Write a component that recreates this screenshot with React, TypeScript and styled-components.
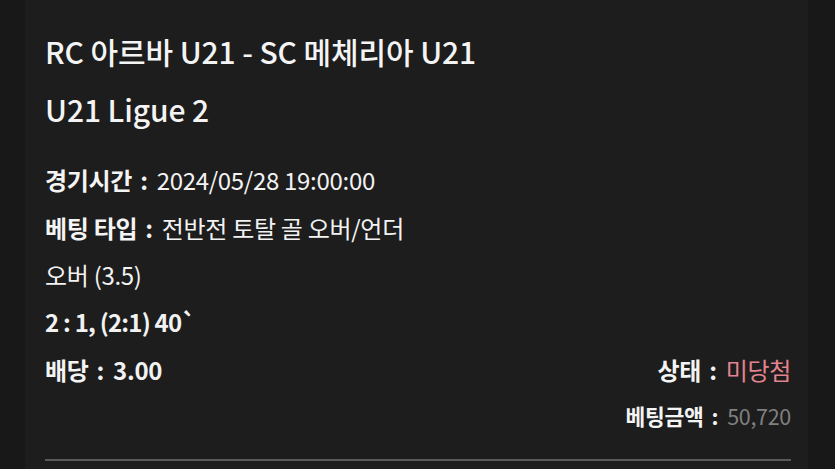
import styled, { createGlobalStyle } from 'styled-components';

const GlobalStyle = createGlobalStyle`
  html, body {
    margin: 0;
    padding: 0;
    background: #181818;
  }
  body {
    font-family: "Noto Sans CJK KR", "Noto Sans", sans-serif;
    color: #f2f2f2;
  }
`;

const Card = styled.section`
  margin: 0 27px 0 25px;
  min-height: 469px;
  box-sizing: border-box;
  background: #1d1d1d;
  padding: 22px 17px 0 20px;
  display: flex;
  flex-direction: column;
`;

const Title = styled.h2`
  margin: 0;
  font-size: 30px;
  font-weight: 500;
  line-height: 58px;
  letter-spacing: -0.1px;
  color: #f4f4f4;
`;

const Details = styled.div`
  margin-top: 18px;
  display: flex;
  flex-direction: column;
`;

const Row = styled.div<{ $split?: boolean }>`
  display: flex;
  justify-content: ${(p) => (p.$split ? 'space-between' : 'flex-start')};
  align-items: center;
  height: 47.4px;
  font-size: 24px;
  letter-spacing: -0.3px;
`;

const Right = styled(Row)`
  justify-content: flex-end;
  height: 45px;
  font-size: 21.5px;
`;

const Label = styled.span`
  font-weight: 700;
  color: #f4f4f4;
`;

const Colon = styled.span`
  font-weight: 700;
  margin: 0 9px 0 8px;
`;

const Value = styled.span<{ $tone?: 'lose' | 'muted' | 'bold' }>`
  font-weight: ${(p) => (p.$tone === 'bold' ? 700 : 400)};
  color: ${(p) =>
    p.$tone === 'lose' ? '#e2848f' : p.$tone === 'muted' ? '#808080' : '#f2f2f2'};
`;

const Score = styled(Value)`
  letter-spacing: -0.8px;
`;

const Divider = styled.hr`
  margin: 21px 0 0 0;
  border: none;
  height: 2px;
  background: #5a5a5a;
`;

export default function App() {
  return (
    <>
      <GlobalStyle />
      <Card>
        <Title>RC 아르바 U21 - SC 메체리아 U21</Title>
        <Title>U21 Ligue 2</Title>
        <Details>
          <Row>
            <Label>경기시간</Label>
            <Colon>:</Colon>
            <Value>2024/05/28 19:00:00</Value>
          </Row>
          <Row>
            <Label>베팅 타입</Label>
            <Colon>:</Colon>
            <Value>전반전 토탈 골 오버/언더</Value>
          </Row>
          <Row>
            <Value>오버 (3.5)</Value>
          </Row>
          <Row>
            <Score $tone="bold">2 : 1, (2:1) 40`</Score>
          </Row>
          <Row $split>
            <span>
              <Label>배당</Label>
              <Colon>:</Colon>
              <Value $tone="bold">3.00</Value>
            </span>
            <span>
              <Label>상태</Label>
              <Colon>:</Colon>
              <Value $tone="lose">미당첨</Value>
            </span>
          </Row>
          <Right>
            <Label>베팅금액</Label>
            <Colon>:</Colon>
            <Value $tone="muted">50,720</Value>
          </Right>
        </Details>
        <Divider />
      </Card>
    </>
  );
}
